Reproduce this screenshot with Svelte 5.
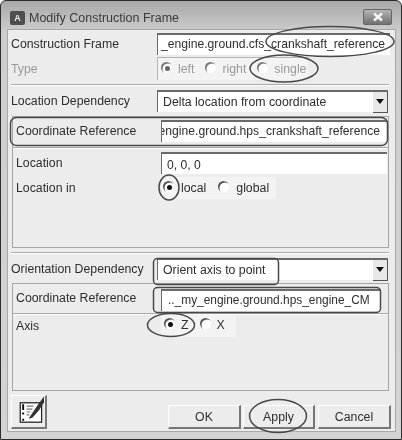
<script>
  const typeOptions = [
    { label: "left", checked: true },
    { label: "right", checked: false },
    { label: "single", checked: false },
  ];
  const locationOptions = [
    { label: "local", checked: true },
    { label: "global", checked: false },
  ];
  const axisOptions = [
    { label: "Z", checked: true },
    { label: "X", checked: false },
  ];
</script>

{#snippet radios(options, cls)}
  <div class="radios {cls}">
    {#each options as opt}
      <span class="radio">
        <span class="dot" class:checked={opt.checked}></span>
        <span>{opt.label}</span>
      </span>
    {/each}
  </div>
{/snippet}

{#snippet dropdown(text)}
  <div class="select">
    <span>{text}</span>
    <span class="arrow-btn"><span class="arrow"></span></span>
  </div>
{/snippet}

<div class="window">
  <div class="titlebar">
    <span class="app-icon">A</span>
    <span class="title">Modify Construction Frame</span>
    <span class="close">
      <svg width="12" height="10" viewBox="0 0 12 10"><path d="M2 1.5 L10 8.5 M10 1.5 L2 8.5" stroke="#f4f4f4" stroke-width="2.4" /></svg>
    </span>
  </div>

  <div class="body">
    <div class="row">
      <span class="label">Construction Frame</span>
      <div class="input"><span>_engine.ground.cfs_crankshaft_reference</span></div>
    </div>
    <div class="row type-row">
      <span class="label disabled">Type</span>
      {@render radios(typeOptions, "type")}
    </div>
    <hr />
    <div class="row">
      <span class="label">Location Dependency</span>
      {@render dropdown("Delta location from coordinate")}
    </div>

    <div class="panel panel-a">
      <div class="row">
        <span class="label">Coordinate Reference</span>
        <div class="input clip"><span>engine.ground.hps_crankshaft_reference</span></div>
      </div>
      <div class="panel-line"></div>
      <div class="row loc">
        <span class="label">Location</span>
        <div class="input"><span>0, 0, 0</span></div>
      </div>
      <div class="row loc-in">
        <span class="label">Location in</span>
        {@render radios(locationOptions, "loc-radios")}
      </div>
    </div>

    <hr />
    <div class="row orient">
      <span class="label">Orientation Dependency</span>
      {@render dropdown("Orient axis to point")}
    </div>

    <div class="panel panel-b">
      <div class="row ref-b">
        <span class="label">Coordinate Reference</span>
        <div class="input short"><span>.._my_engine.ground.hps_engine_CM</span></div>
      </div>
      <div class="panel-line"></div>
      <div class="row">
        <span class="label">Axis</span>
        {@render radios(axisOptions, "axis-radios")}
      </div>
    </div>

    <div class="footer">
      <button class="note-btn" aria-label="Comments">
        <svg width="34" height="34" viewBox="0 0 34 34">
          <rect x="8.5" y="7.5" width="22" height="20" fill="#fff" stroke="#222" stroke-width="1.3" />
          <path d="M11.5 9v6M11.5 17.5v2M11.5 24v2" stroke="#111" stroke-width="2" />
          <path d="M15 11h7M15 14h6M15 17h4M15 20h3" stroke="#777" stroke-width="1.2" />
          <path d="M17 24 L27 9 L33 1 L33 7 L28 15 L21 23Z" fill="#333" />
        </svg>
      </button>
      <div class="actions">
        <button class="btn">OK</button>
        <button class="btn apply">Apply</button>
        <button class="btn">Cancel</button>
      </div>
    </div>
  </div>

  <!-- hand-drawn markup on top of the dialog -->
  <svg class="marks" width="402" height="440" viewBox="0 0 402 440">
    <g fill="none" stroke="#484848" stroke-width="1.5">
      <ellipse cx="330" cy="41.5" rx="64" ry="15" />
      <ellipse cx="284" cy="68.5" rx="34" ry="13.5" />
      <rect x="10.5" y="117.5" width="377" height="28" rx="6" />
      <ellipse cx="169" cy="187.5" rx="10" ry="12.5" />
      <rect x="153.5" y="258.5" width="125" height="26" rx="4" />
      <rect x="153.5" y="287.5" width="227" height="25" rx="4" />
      <ellipse cx="171" cy="325" rx="23.5" ry="11.5" />
      <ellipse cx="278" cy="416" rx="28.5" ry="16.5" />
    </g>
  </svg>
</div>

<style>
  :global(body) {
    margin: 0;
    background: #fff;
  }

  .window {
    position: relative;
    box-sizing: border-box;
    width: 402px;
    height: 440px;
    padding: 0 5px 7px 6px;
    background: linear-gradient(#a8a8a8, #cdcdcd 7%, #d4d4d4);
    border: 1px solid #2c2c2c;
    border-radius: 6px 6px 0 0;
    font-family: "Liberation Sans", Arial, sans-serif;
    font-size: 12.3px;
    color: #2e2e2e;
    overflow: hidden;
    filter: blur(0.3px);
  }

  .titlebar {
    box-sizing: border-box;
    display: flex;
    align-items: center;
    height: 28px;
    padding: 5px 0 0 3px;
    gap: 4px;
  }

  .app-icon {
    display: flex;
    align-items: center;
    justify-content: center;
    width: 15px;
    height: 14px;
    background: #4e4e4e;
    border-radius: 2px;
    color: #eee;
    font-size: 9px;
    font-weight: bold;
  }

  .title {
    font-size: 12.5px;
    color: #3a3a3a;
  }

  .close {
    display: flex;
    align-items: center;
    justify-content: center;
    margin: -1px 4px 0 auto;
    width: 27px;
    height: 14px;
    background: linear-gradient(#b4b4b4, #707070);
    border: 1px solid #666;
    border-radius: 2px;
  }

  .body {
    box-sizing: border-box;
    height: 403px;
    padding: 3px 5px 0 3px;
    background: #ececec;
    border: 1px solid #a8a8a8;
  }

  .row {
    display: flex;
    align-items: center;
  }

  .label {
    flex: none;
    width: 146px;
    white-space: nowrap;
  }

  .panel .label {
    width: 145px;
  }

  .disabled {
    color: #9a9a9a;
  }

  .type-row {
    margin-top: 2px;
  }

  .input {
    box-sizing: border-box;
    flex: 1;
    min-width: 0;
    height: 22px;
    line-height: 19px;
    font-size: 12.15px;
    padding-left: 3px;
    background: #fff;
    border-top: 2px solid #6a6a6a;
    border-left: 1px solid #6a6a6a;
    overflow: hidden;
    white-space: nowrap;
  }

  .clip {
    display: flex;
    justify-content: flex-end;
    padding: 0 7px 0 0;
    margin-right: 1px;
  }

  .short {
    flex: none;
    width: 220px;
    padding-left: 6px;
    font-size: 11.9px;
  }

  .select {
    box-sizing: border-box;
    display: flex;
    flex: 1;
    align-items: center;
    justify-content: space-between;
    height: 22px;
    padding-left: 5px;
    margin-right: 2px;
    background: #fff;
    border-top: 2px solid #6a6a6a;
    border-left: 1px solid #6a6a6a;
  }

  .arrow-btn {
    display: flex;
    align-items: center;
    justify-content: center;
    width: 14px;
    height: 20px;
    background: #e8e8e8;
    border-right: 1px solid #555;
    border-bottom: 1px solid #555;
  }

  .arrow {
    width: 0;
    height: 0;
    border-left: 4px solid transparent;
    border-right: 4px solid transparent;
    border-top: 5px solid #111;
  }

  hr {
    margin: 4px 1px 4px 0;
    height: 0;
    border: 0;
    border-top: 1px solid #a8a8a8;
    border-bottom: 1px solid #fff;
  }

  .orient {
    margin-top: 1px;
  }

  .panel {
    box-sizing: border-box;
    margin: 4px 1px 0 1px;
    padding-left: 3px;
    border: 1px solid #a6a6a6;
  }

  .panel-a {
    height: 132px;
    padding-top: 3px;
  }

  .panel-b {
    height: 108px;
    margin-top: 3px;
    padding-top: 5px;
  }

  .panel-line {
    height: 0;
    margin: 5px 0 0 -3px;
    border-top: 1px solid #a8a8a8;
    border-bottom: 1px solid #fff;
  }

  .panel-b .panel-line {
    margin-top: 2px;
  }

  .ref-b .label {
    margin-bottom: 4px;
  }

  .loc {
    margin-top: 3px;
  }

  .loc .input {
    margin-right: 1px;
    padding: 2px 0 0 5px;
  }

  .loc-in {
    margin-top: 3px;
  }

  .radios {
    display: flex;
    align-items: center;
    height: 22px;
    background: #f3f3f3;
  }

  .type {
    gap: 11px;
    padding: 0 2px 0 3px;
    color: #9a9a9a;
    border-top: 1px solid #b5b5b5;
    border-left: 1px solid #b5b5b5;
  }

  .loc-radios {
    gap: 12px;
    padding: 0 7px 0 2px;
  }

  .loc-radios .dot {
    margin-right: 1px;
  }

  .axis-radios {
    gap: 11px;
    padding: 0 11px 0 3px;
  }

  .axis-radios .radio {
    padding-bottom: 2px;
  }

  .radio {
    display: flex;
    align-items: center;
    gap: 6px;
  }

  .dot {
    position: relative;
    width: 11px;
    height: 11px;
    margin-top: -3px;
    border-radius: 50%;
    background: #fff;
    box-shadow: inset 1.5px 1.5px 0 #555;
  }

  .dot.checked::after {
    content: "";
    position: absolute;
    left: 3.5px;
    top: 3.5px;
    width: 5px;
    height: 5px;
    border-radius: 50%;
    background: #111;
  }

  .type .dot {
    box-shadow: inset 1.5px 1.5px 0 #777;
  }

  .type .dot.checked::after {
    background: #666;
  }

  .footer {
    display: flex;
    align-items: flex-end;
    justify-content: space-between;
    margin-right: -1px;
    padding-top: 4px;
  }

  button {
    font: inherit;
    color: #2e2e2e;
    background: #ececec;
    border: 0;
    border-right: 2px solid #777;
    border-bottom: 2px solid #777;
    border-left: 1px solid #fff;
    border-top: 1px solid #fff;
    padding: 0;
  }

  .note-btn {
    display: flex;
    align-items: center;
    justify-content: center;
    width: 36px;
    height: 34px;
  }

  .actions {
    display: flex;
    gap: 3px;
  }

  .btn {
    width: 73px;
    height: 24px;
  }

  .apply {
    width: 72px;
    margin-left: -1px;
  }

  .marks {
    position: absolute;
    left: -1px;
    top: -1px;
    pointer-events: none;
  }
</style>
